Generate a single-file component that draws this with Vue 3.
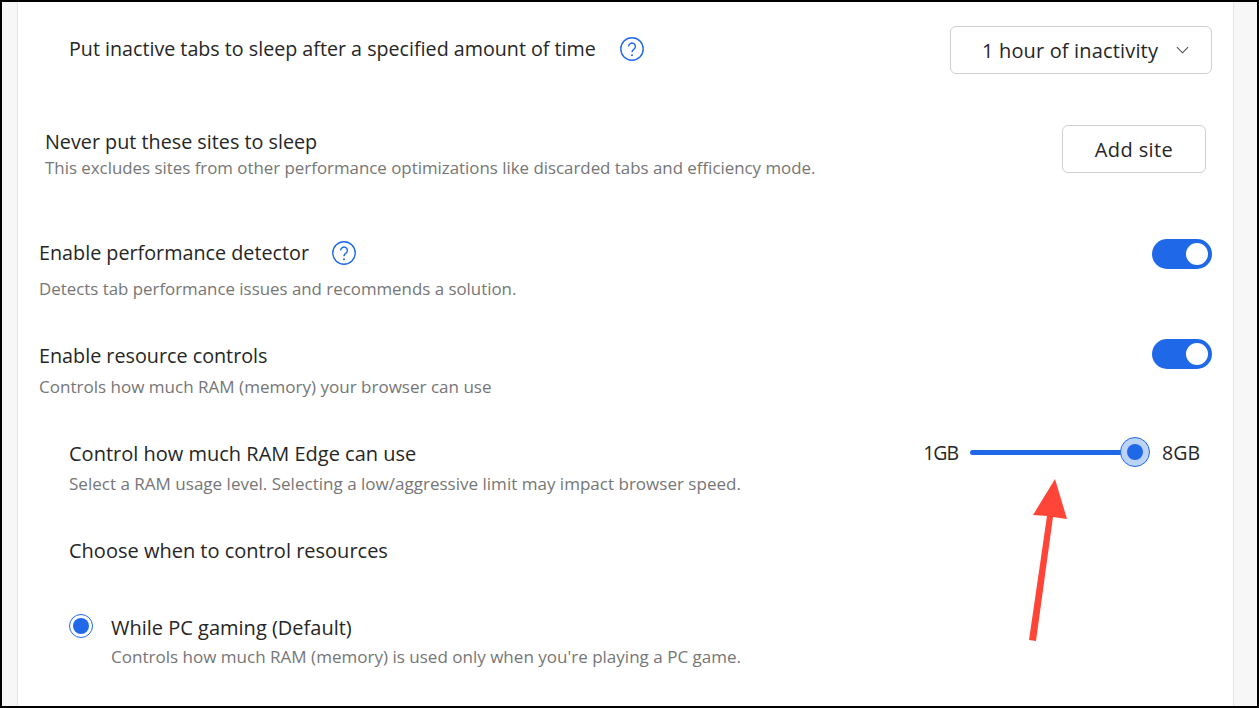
<script setup>
const helpPath = "M8.6 9.4a3.4 3.4 0 1 1 5.4 2.8c-1.3.9-2 1.5-2 3"
</script>

<template>
  <div class="frame">
    <main class="card">
      <section class="row sleep">
        <div class="title-line first">
          <span class="title">Put inactive tabs to sleep after a specified amount of time</span>
          <svg class="help" viewBox="0 0 24 24"><circle cx="12" cy="12" r="11.2" /><path :d="helpPath" /><circle class="dot" cx="12" cy="18.2" r="1" /></svg>
        </div>
        <button class="select">
          <span>1 hour of inactivity</span>
          <svg class="chev" viewBox="0 0 14 8"><path d="M1 1l6 6 6-6" /></svg>
        </button>
      </section>

      <section class="row never">
        <div class="text-top">
          <div class="title">Never put these sites to sleep</div>
          <div class="sub">This excludes sites from other performance optimizations like discarded tabs and efficiency mode.</div>
        </div>
        <button class="add">Add site</button>
      </section>

      <section class="row detector">
        <div>
          <div class="title-line">
            <span class="title">Enable performance detector</span>
            <svg class="help" viewBox="0 0 24 24"><circle cx="12" cy="12" r="11.2" /><path :d="helpPath" /><circle class="dot" cx="12" cy="18.2" r="1" /></svg>
          </div>
          <div class="sub">Detects tab performance issues and recommends a solution.</div>
        </div>
        <span class="toggle"><i></i></span>
      </section>

      <section class="row controls">
        <div class="text-top">
          <div class="title">Enable resource controls</div>
          <div class="sub wide">Controls how much RAM (memory) your browser can use</div>
        </div>
        <span class="toggle"><i></i></span>
      </section>

      <section class="row ram">
        <div>
          <div class="title big">Control how much RAM Edge can use</div>
          <div class="sub wide">Select a RAM usage level. Selecting a low/aggressive limit may impact browser speed.</div>
        </div>
        <div class="slider">
          <span class="min">1GB</span>
          <span class="track"><b class="thumb"><i></i></b></span>
          <span class="max">8GB</span>
        </div>
      </section>

      <div class="choose title big">Choose when to control resources</div>

      <section class="radio-row">
        <span class="radio"><i></i></span>
        <div class="radio-text">
          <div class="title big">While PC gaming (Default)</div>
          <div class="sub wide">Controls how much RAM (memory) is used only when you're playing a PC game.</div>
        </div>
      </section>
    </main>

    <svg class="arrow" viewBox="1025 475 50 170">
      <path d="M1055 479L1067 519 1053 517 1036 641 1029 640 1047 516 1033 515Z" />
    </svg>
  </div>
</template>

<style>
html, body { margin: 0; background: #fff; }
</style>

<style scoped>
.frame {
  position: relative;
  box-sizing: border-box;
  width: 1259px;
  height: 708px;
  overflow: hidden;
  border: 2px solid #000;
  background: #f7f7f7;
  padding: 0 23px 0 15px;
  font-family: "Open Sans", "Noto Sans", sans-serif;
  color: #262626;
}
.card {
  box-sizing: border-box;
  height: 100%;
  background: #fff;
  border-left: 1px solid #e4e4e4;
  border-right: 1px solid #e4e4e4;
  padding: 0 21px;
}
.row {
  display: flex;
  justify-content: space-between;
  align-items: flex-start;
  box-sizing: border-box;
}
.title-line { display: flex; align-items: center; gap: 23px; }
.title { font-size: 19.75px; line-height: 28px; color: #262626; }
.title.big { font-size: 20px; }
.sub { font-size: 16.88px; line-height: 24px; color: #767676; margin-top: 4px; }
.sub.wide { font-size: 17.05px; }
.text-top { margin-top: 3px; }
.help { width: 24px; height: 24px; fill: none; stroke: #1f69e8; stroke-width: 1.4; flex: none; }
.help .dot { fill: #1f69e8; stroke: none; }
.sleep { padding: 24px 0 0 30px; height: 123px; }
.first { height: 46px; gap: 24px; }
.first .title { font-size: 19.68px; }
.select {
  display: flex; align-items: center; justify-content: space-between;
  box-sizing: border-box; width: 262px; height: 48px; padding: 1px 22px 0 31px;
  background: #fff; border: 1px solid #d0d0d0; border-radius: 6px;
  font: 500 20px "Open Sans", sans-serif; letter-spacing: .16px; color: #262626;
}
.chev { width: 13px; height: 8px; margin-top: -1px; fill: none; stroke: #444; stroke-width: 1.1; }
.never { padding: 0 6px; height: 114px; }
.never .sub { margin-top: 0; }
.add {
  box-sizing: border-box; width: 144px; height: 48px; background: #fff;
  border: 1px solid #d0d0d0; border-radius: 6px;
  font: 500 20px "Open Sans", sans-serif; letter-spacing: .4px; color: #262626;
}
.toggle {
  position: relative; display: block; width: 60px; height: 30px;
  border-radius: 15px; background: #1f69e8;
}
.toggle i {
  position: absolute; right: 4px; top: 4px; width: 22px; height: 22px; border-radius: 50%; background: #fff;
}
.detector { height: 100px; }
.detector .title-line { height: 28px; }
.detector .sub { margin-top: 10px; }
.controls { height: 101px; }
.controls .sub { margin-top: 5px; }
.ram { padding: 0 12px 0 30px; height: 97px; }
.ram .sub { margin-top: 4px; }
.slider { display: flex; align-items: center; gap: 12px; font-size: 19.5px; line-height: 26px; }
.min { letter-spacing: -1px; }
.track {
  position: relative; display: block; width: 180px; height: 5px; margin-top: -2px; border-radius: 3px;
}
.track::before {
  content: ""; position: absolute; left: 0; right: 15px; top: 0; height: 5px; border-radius: 3px; background: #1f69e8;
}
.thumb {
  position: absolute; right: 0; top: -13px; box-sizing: border-box;
  width: 30px; height: 30px; border-radius: 50%; background: #bcd2f7; border: 1px solid #1f69e8;
  display: flex; align-items: center; justify-content: center;
}
.thumb i { width: 16px; height: 16px; border-radius: 50%; background: #1f69e8; }
.choose { padding-left: 30px; height: 76px; }
.radio-row { display: flex; gap: 18px; padding-left: 30px; }
.radio {
  box-sizing: border-box; width: 24px; height: 24px; margin-top: 1px; border-radius: 50%;
  border: 1.5px solid #1f69e8; display: flex; align-items: center; justify-content: center; flex: none;
}
.radio i { width: 16px; height: 16px; border-radius: 50%; background: #1f69e8; }
.radio-text { margin-top: 1px; }
.radio-text .sub { margin-top: 3px; }
.arrow {
  position: absolute; left: 1023px; top: 473px; width: 50px; height: 170px;
  fill: #ff4438;
}
</style>
